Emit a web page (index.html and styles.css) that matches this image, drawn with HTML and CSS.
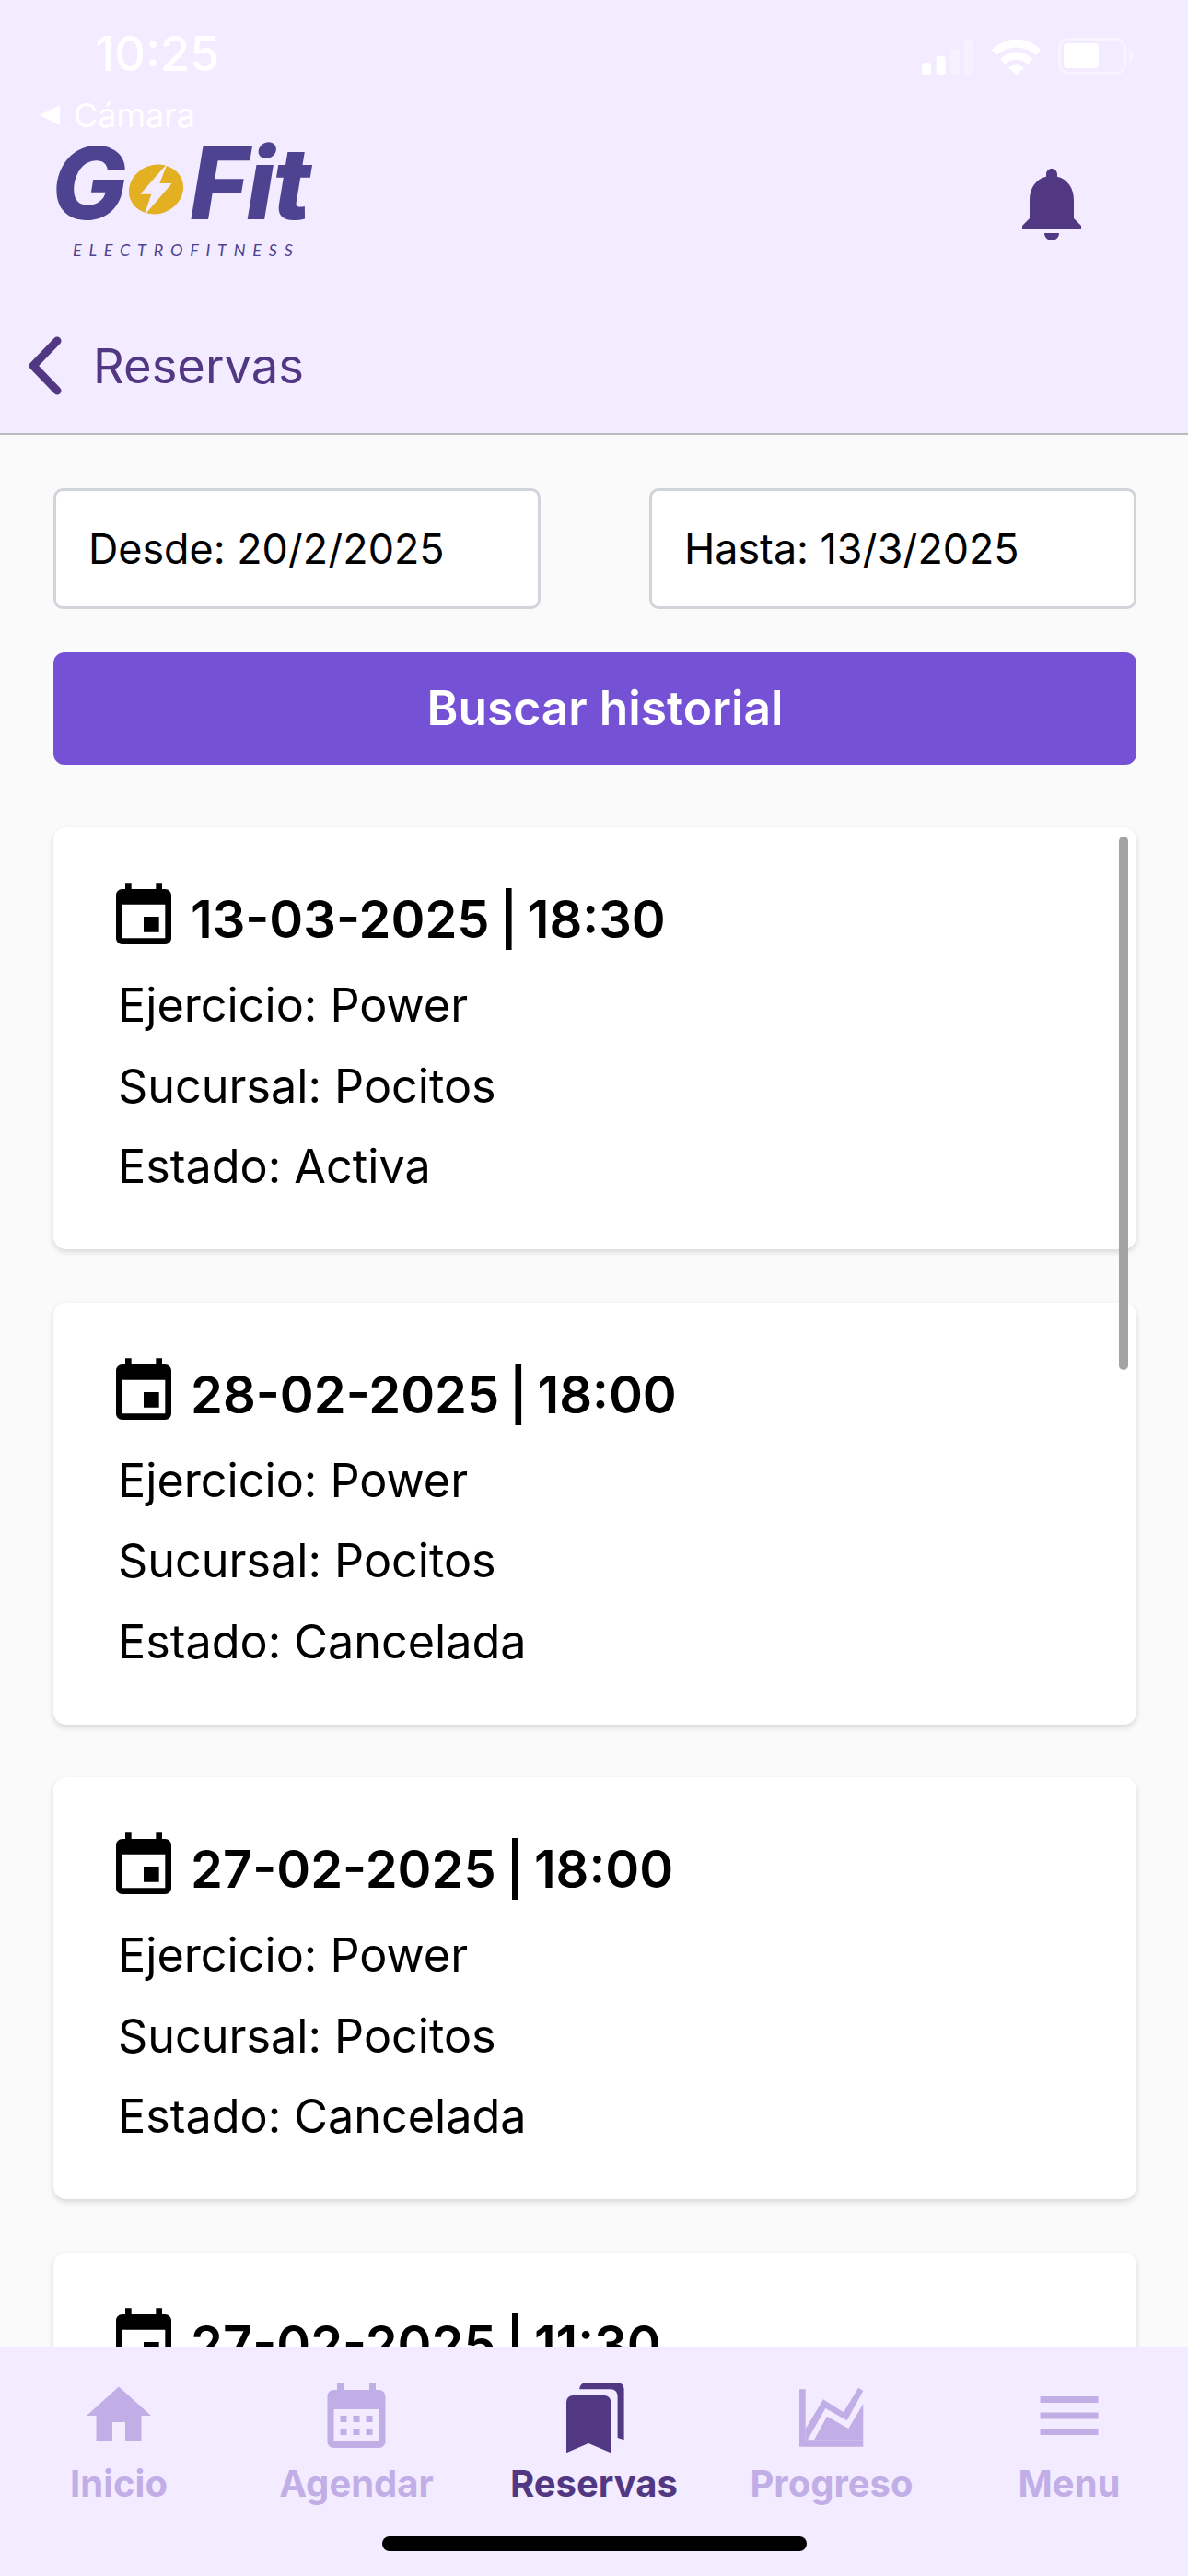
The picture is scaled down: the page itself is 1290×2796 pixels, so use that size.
FILE: index.html
```html
<!DOCTYPE html>
<html lang="es">
<head>
    <meta charset="UTF-8">
    <meta name="viewport" content="width=device-width, initial-scale=1.0">
    <title>Reservas</title>
    <link rel="stylesheet" href="styles.css">
</head>
<body>
    <header class="header">
        <div class="status">
            <span class="time">10:25</span>
            <div class="status-icons">
                <svg class="signal" viewBox="0 0 57 38" width="57" height="38">
                    <rect x="0" y="25" width="10" height="13" rx="3" fill="#fff"/>
                    <rect x="15.700" y="18" width="10" height="20" rx="3" fill="#fff"/>
                    <rect x="31" y="10" width="10" height="28" rx="3" fill="#fff" opacity=".3"/>
                    <rect x="46.500" y="0" width="10" height="38" rx="3" fill="#fff" opacity=".3"/>
                </svg>
                <svg class="wifi" viewBox="0 0 53 38" width="53" height="38">
                    <path d="M0 11C15-4 38-4 53 11l-5 6C36 6 17 6 5 17zM9 21c10-10 25-10 35 0l-5 6c-7-7-18-7-25 0zM18 31c5-5 12-5 17 0l-8.500 7z" fill="#fff"/>
                </svg>
                <svg class="battery" viewBox="0 0 82 40" width="82" height="40">
                    <rect x="1.500" y="1.500" width="71" height="37" rx="10" fill="none" stroke="#fff" stroke-width="3" opacity=".45"/>
                    <rect x="6" y="6" width="38" height="27" rx="4" fill="#fff"/>
                    <path d="M77 13c3 1 5 4 5 7s-2 6-5 7z" fill="#fff" opacity=".45"/>
                </svg>
            </div>
        </div>
        <div class="camera-back">
            <span class="camera-arrow"></span>
            <span>Cámara</span>
        </div>
        <div class="brand-row">
            <div class="logo">
                <div class="logo-word">
                    <span>G</span>
                    <svg class="logo-coin" viewBox="0 0 60 56" width="60" height="56">
                        <ellipse cx="29.500" cy="27.500" rx="30" ry="26.500" transform="rotate(-20 29.500 27.500)" fill="#e3b021"/>
                        <path d="M42-1L12.300 32.700h12L16.500 56 46.700 21H33.300z" fill="#f3ebff"/>
                    </svg>
                    <span class="logo-fit">Fit</span>
                </div>
                <div class="logo-sub">ELECTROFITNESS</div>
            </div>
            <svg class="bell" viewBox="0 0 24 24" width="96" height="96">
                <path d="M12 22c1.100 0 2-.9 2-2h-4c0 1.100.89 2 2 2zm6-6v-5c0-3.070-1.640-5.640-4.500-6.320V4c0-.83-.67-1.500-1.500-1.500s-1.500.67-1.500 1.500v.68C7.630 5.360 6 7.920 6 11v5l-2 2v1h16v-1l-2-2z"/>
            </svg>
        </div>
        <div class="title-row">
            <svg class="chevron" viewBox="0 0 40 64" width="40" height="64">
                <path d="M33 5L7 32l26 27" fill="none" stroke="#523882" stroke-width="9" stroke-linecap="round" stroke-linejoin="round"/>
            </svg>
            <h1 class="title">Reservas</h1>
        </div>
    </header>

    <main class="content">
        <div class="dates">
            <div class="date-box">Desde: 20/2/2025</div>
            <div class="date-box">Hasta: 13/3/2025</div>
        </div>
        <button class="search-btn">Buscar historial</button>

        <div class="list">
            <article class="card">
                <div class="card-head">
                    <svg viewBox="0 0 24 24" width="80" height="80"><path d="M17 12h-5v5h5v-5zM16 1v2H8V1H6v2H5c-1.110 0-1.990.9-1.990 2L3 19c0 1.100.89 2 2 2h14c1.100 0 2-.9 2-2V5c0-1.100-.9-2-2-2h-1V1h-2zm3 18H5V8h14v11z"/></svg>
                    <span>13-03-2025 | 18:30</span>
                </div>
                <p>Ejercicio: Power</p>
                <p>Sucursal: Pocitos</p>
                <p>Estado: Activa</p>
            </article>
            <article class="card">
                <div class="card-head">
                    <svg viewBox="0 0 24 24" width="80" height="80"><path d="M17 12h-5v5h5v-5zM16 1v2H8V1H6v2H5c-1.110 0-1.990.9-1.990 2L3 19c0 1.100.89 2 2 2h14c1.100 0 2-.9 2-2V5c0-1.100-.9-2-2-2h-1V1h-2zm3 18H5V8h14v11z"/></svg>
                    <span>28-02-2025 | 18:00</span>
                </div>
                <p>Ejercicio: Power</p>
                <p>Sucursal: Pocitos</p>
                <p>Estado: Cancelada</p>
            </article>
            <article class="card">
                <div class="card-head">
                    <svg viewBox="0 0 24 24" width="80" height="80"><path d="M17 12h-5v5h5v-5zM16 1v2H8V1H6v2H5c-1.110 0-1.990.9-1.990 2L3 19c0 1.100.89 2 2 2h14c1.100 0 2-.9 2-2V5c0-1.100-.9-2-2-2h-1V1h-2zm3 18H5V8h14v11z"/></svg>
                    <span>27-02-2025 | 18:00</span>
                </div>
                <p>Ejercicio: Power</p>
                <p>Sucursal: Pocitos</p>
                <p>Estado: Cancelada</p>
            </article>
            <article class="card">
                <div class="card-head">
                    <svg viewBox="0 0 24 24" width="80" height="80"><path d="M17 12h-5v5h5v-5zM16 1v2H8V1H6v2H5c-1.110 0-1.990.9-1.990 2L3 19c0 1.100.89 2 2 2h14c1.100 0 2-.9 2-2V5c0-1.100-.9-2-2-2h-1V1h-2zm3 18H5V8h14v11z"/></svg>
                    <span>27-02-2025 | 11:30</span>
                </div>
            </article>
        </div>
        <div class="scroll-thumb"></div>
    </main>

    <nav class="tabbar">
        <div class="tabs">
            <a class="tab">
                <svg viewBox="0 0 24 24" width="84" height="84"><path d="M10 20v-6h4v6h5v-8h3L12 3 2 12h3v8z"/></svg>
                <span>Inicio</span>
            </a>
            <a class="tab">
                <svg viewBox="0 0 24 24" width="84" height="84"><path d="M19 4h-1V2h-2v2H8V2H6v2H5c-1.100 0-2 .9-2 2v14c0 1.100.9 2 2 2h14c1.100 0 2-.9 2-2V6c0-1.100-.9-2-2-2zm0 16H5V10h14v10zM9 14H7v-2h2v2zm4 0h-2v-2h2v2zm4 0h-2v-2h2v2zm-8 4H7v-2h2v2zm4 0h-2v-2h2v2zm4 0h-2v-2h2v2z"/></svg>
                <span>Agendar</span>
            </a>
            <a class="tab active">
                <svg viewBox="0 0 84 84" width="84" height="84">
                    <path d="M26.300 13.300c0-4 3-7.300 7.300-7.300h34a7 7 0 0 1 7 7v55.300l-7-2.300V20a7 7 0 0 0-7-6.700z"/>
                    <path d="M12 27a7 7 0 0 1 7-7h34.300a7 7 0 0 1 7 7v55.300L36 72 12 82.300z"/>
                </svg>
                <span>Reservas</span>
            </a>
            <a class="tab">
                <svg viewBox="0 0 84 84" width="84" height="84">
                    <path d="M7 13.300h6.700v55h62.600v7.400H7z"/>
                    <path d="M23 68.300l14-25.600L60.300 56l16-26.700v39z"/>
                    <path d="M13.700 56L33 24.300l22 14 16-26.600 5.300 3.300-17.600 32.300-23.400-13.300L16 68.300h-2.300z"/>
                </svg>
                <span>Progreso</span>
            </a>
            <a class="tab">
                <svg viewBox="0 0 24 24" width="84" height="84"><path d="M3 18h18v-2H3v2zm0-5h18v-2H3v2zm0-7v2h18V6H3z"/></svg>
                <span>Menu</span>
            </a>
        </div>
        <div class="home-bar"></div>
    </nav>
</body>
</html>
```

FILE: styles.css
```css
html{
    box-sizing: border-box;
    font-family: "Inter", "Liberation Sans", sans-serif;
    color: #000;
}
*,
*::before,
*::after{
    box-sizing: inherit;
}
body{
    margin: 0;
    width: 1290px;
    height: 2796px;
    display: flex;
    flex-direction: column;
    overflow: hidden;
    background-color: #fafafa;
}
svg{
    display: block;
    flex-shrink: 0;
}

/* top area */
.header{
    height: 472px;
    padding-top: 30px;
    background-color: #f3ebff;
    border-bottom: 2px solid #bcbcbc;
}
.status{
    height: 58px;
    padding: 0 59px 0 103px;
    display: flex;
    justify-content: space-between;
    align-items: center;
}
.time{
    font-size: 52px;
    font-weight: 500;
    line-height: 58px;
    color: #fff;
}
.status-icons{
    display: flex;
    align-items: flex-end;
    gap: 19px;
    margin-top: 4px;
}
.camera-back{
    margin-top: 16px;
    padding-left: 43px;
    height: 42px;
    display: flex;
    align-items: center;
    gap: 15px;
    font-size: 36px;
    line-height: 42px;
    color: #fff;
}
.camera-arrow{
    width: 0;
    height: 0;
    border-top: 11px solid transparent;
    border-bottom: 11px solid transparent;
    border-right: 22px solid #fff;
}
.brand-row{
    padding: 0 100px 0 56px;
    display: flex;
    justify-content: space-between;
    align-items: flex-start;
}
.logo{
    margin-top: 8px;
    color: #4d4390;
}
.logo-word{
    display: flex;
    align-items: center;
    font-size: 108px;
    font-weight: 800;
    font-style: italic;
    line-height: 90px;
    height: 90px;
}
.logo-coin{
    margin: 14px 0 0 3px;
}
.logo-fit{
    margin-left: 6px;
    letter-spacing: -2px;
}
.logo-sub{
    margin: 16px 0 0 23px;
    font-family: "Lato", sans-serif;
    font-size: 18px;
    font-style: italic;
    letter-spacing: 7.800px;
    line-height: 22px;
}
.bell{
    margin-top: 27px;
    fill: #523882;
}
.title-row{
    margin-top: 83px;
    padding-left: 29px;
    display: flex;
    align-items: center;
    gap: 32px;
}
.title{
    margin: 0;
    font-size: 52.500px;
    font-weight: 400;
    line-height: 64px;
    color: #523882;
}

/* scrolling list */
.content{
    position: relative;
    flex: 1;
    min-height: 0;
    padding: 58px 56px 0 58px;
    overflow: hidden;
}
.dates{
    display: flex;
    justify-content: space-between;
}
.date-box{
    width: 529px;
    height: 131px;
    padding-left: 35px;
    display: flex;
    align-items: center;
    font-size: 44.800px;
    background-color: #fff;
    border: 3px solid #d1d5db;
    border-radius: 10px;
}
.search-btn{
    display: block;
    width: 100%;
    height: 122px;
    margin-top: 47px;
    padding: 0 0 2px 22px;
    border: none;
    border-radius: 12px;
    background-color: #7551d6;
    color: #fff;
    font-family: inherit;
    font-size: 51.500px;
    font-weight: 600;
}
.list{
    margin-top: 68px;
    display: flex;
    flex-direction: column;
    gap: 57.500px;
}
.card{
    flex-shrink: 0;
    height: 458px;
    padding: 57px 70px 0;
    background-color: #fff;
    border-radius: 14px;
    box-shadow: 0 3px 6px rgba(0, 0, 0, .14);
}
.card-head{
    display: flex;
    align-items: flex-start;
    gap: 11px;
    height: 80px;
    margin: 0 0 12px -12px;
    font-size: 56px;
    font-weight: 600;
    line-height: 80px;
    word-spacing: -3.500px;
}
.card-head span{
    margin-top: 3px;
}
.card p{
    margin: 0;
    font-size: 50.300px;
    line-height: 87.500px;
}
.scroll-thumb{
    position: absolute;
    top: 436px;
    right: 65px;
    width: 10.500px;
    height: 579px;
    border-radius: 5px;
    background-color: #a3a3a3;
}

/* bottom tabs */
.tabbar{
    height: 249px;
    flex-shrink: 0;
    padding-top: 33px;
    background-color: #f3ebff;
}
.tabs{
    display: flex;
}
.tab{
    flex: 1;
    display: flex;
    flex-direction: column;
    align-items: center;
    color: #c2aee6;
    fill: #c2aee6;
    font-size: 40px;
    font-weight: 700;
    line-height: 48px;
}
.tab span{
    margin-top: 8px;
}
.tab.active{
    color: #523882;
    fill: #523882;
}
.home-bar{
    width: 461px;
    height: 16px;
    margin: 33px auto 0;
    border-radius: 8px;
    background-color: #000;
}
```
